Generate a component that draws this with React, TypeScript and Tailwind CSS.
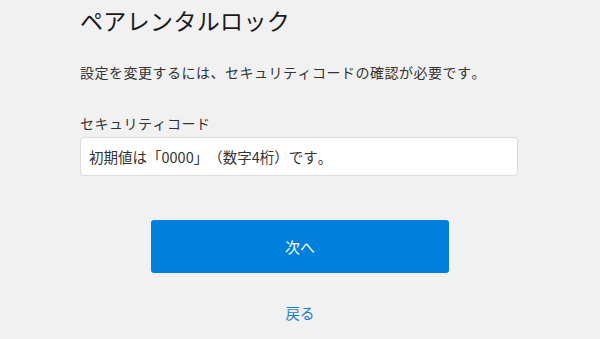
import React from "react";

export default function App() {
  return (
    <div
      className="w-[600px] h-[339px] overflow-hidden bg-[#f1f1f1] text-[#333] [text-spacing-trim:space-all] [font-kerning:none]"
      style={{ fontFamily: '"Noto Sans CJK JP", "Noto Sans", sans-serif' }}
    >
      <div className="pl-[80px] pr-[82px] pt-[5px]">
        <h1 className="text-[23px] tracking-[0.35px] leading-[30px] text-[#1a1a1a] font-normal">ペアレンタルロック</h1>
        <p className="mt-[27px] text-[14px] tracking-[0.5px] leading-[20px]">
          設定を変更するには、セキュリティコードの確認が必要です。
        </p>
        <div className="mt-[31px] text-[14px] tracking-[0.5px] leading-[20px]">セキュリティコード</div>
        <input
          type="text"
          placeholder="初期値は「0000」（数字4桁）です。"
          className="mt-[4px] block w-[438px] h-[39px] rounded-[4px] border border-[#dcdcdc] bg-white px-[8px] text-[14.5px] text-[#333] placeholder:text-[#333] outline-none [text-spacing-trim:space-all] [font-kerning:none]"
        />
      </div>
      <div className="flex flex-col items-center">
        <button className="mt-[44px] w-[298px] h-[53px] rounded-[3px] bg-[#0080dd] text-white text-[15px] leading-[20px]">
          次へ
        </button>
        <a href="#" className="mt-[30px] text-[#1a7fd4] text-[14.5px] leading-[20px]">
          戻る
        </a>
      </div>
    </div>
  );
}
